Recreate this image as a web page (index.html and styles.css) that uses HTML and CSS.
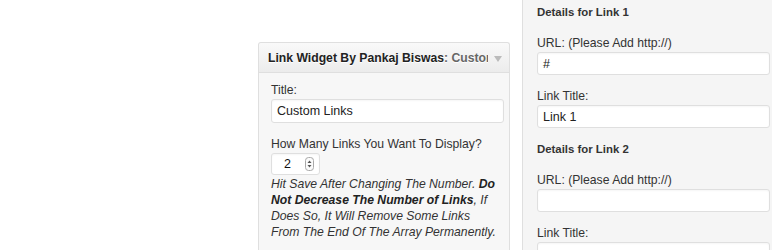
FILE: index.html
```html
<!DOCTYPE html>
<html lang="en">
<head>
  <meta charset="UTF-8">
  <title>Link Widget</title>
  <link rel="stylesheet" href="styles.css">
</head>
<body>
  <div class="page">
    <div class="widgets">
      <div class="widget">
        <div class="widget-top">
          <h3 class="widget-title">Link Widget By Pankaj Biswas<span class="in-title">: Custom Links</span></h3>
          <span class="widget-arrow"></span>
        </div>
        <div class="widget-inside">
          <p class="field">
            <label>Title:</label>
            <span class="input">Custom Links</span>
          </p>
          <p class="field">
            <label>How Many Links You Want To Display?</label>
            <span class="input number">
              <span class="num-value">2</span>
              <svg class="spinner" width="9" height="14" viewBox="0 0 9 14">
                <rect x="0.5" y="0.5" width="8" height="13" rx="3" fill="#fbfbfb" stroke="#a9a9a9"/>
                <path d="M2.5 6 L4.5 3.5 L6.5 6 Z" fill="#555"/>
                <path d="M2.5 8 L4.5 10.5 L6.5 8 Z" fill="#555"/>
              </svg>
            </span>
          </p>
          <p class="note">Hit Save After Changing The Number. <b>Do Not Decrease The Number of Links</b>, If Does So, It Will Remove Some Links From The End Of The Array Permanently.</p>
        </div>
      </div>
    </div>

    <div class="details">
      <h4>Details for Link 1</h4>
      <p class="field">
        <label>URL: (Please Add http://)</label>
        <span class="input">#</span>
      </p>
      <p class="field">
        <label>Link Title:</label>
        <span class="input">Link 1</span>
      </p>

      <h4>Details for Link 2</h4>
      <p class="field">
        <label>URL: (Please Add http://)</label>
        <span class="input"></span>
      </p>
      <p class="field">
        <label>Link Title:</label>
        <span class="input"></span>
      </p>
    </div>
  </div>
</body>
</html>
```

FILE: styles.css
```css
* {
  box-sizing: border-box;
}

body {
  margin: 0;
  font-family: "Liberation Sans", Arial, sans-serif;
  font-size: 12.2px;
  line-height: 16px;
  color: #333;
  background: #fff;
  overflow: hidden;
}

.page {
  display: flex;
  height: 250px;
}

.widgets {
  width: 522px;
  flex: none;
  padding: 42px 0 0 258px;
}

.widget {
  width: 252px;
  height: 208px;
  border: 1px solid #dfdfdf;
  border-bottom: none;
  border-radius: 3px 3px 0 0;
  background: #f7f7f7;
}

.widget-top {
  display: flex;
  align-items: center;
  height: 30px;
  border-bottom: 1px solid #dfdfdf;
  background: linear-gradient(to bottom, #f9f9f9, #ececec);
  border-radius: 3px 3px 0 0;
}

.widget-title {
  margin: 0;
  padding: 0 0 0 9px;
  width: 229px;
  font-size: 12.2px;
  font-weight: bold;
  color: #222;
  white-space: nowrap;
  overflow: hidden;
  text-shadow: 0 1px 0 #fff;
}

.in-title {
  color: #666;
}

.widget-arrow {
  margin-left: 6px;
  width: 0;
  height: 0;
  border-left: 4px solid transparent;
  border-right: 4px solid transparent;
  border-top: 6px solid #bbb;
  margin-top: 2px;
}

.widget-inside {
  padding: 9px 5px 0 12px;
}

.field {
  margin: 0 0 13px;
}

.field label {
  display: block;
  color: #333;
}

.input {
  display: flex;
  align-items: center;
  height: 24px;
  margin-top: 1px;
  padding: 0 5px;
  background: #fff;
  border: 1px solid #dfdfdf;
  border-radius: 3px;
  color: #222;
  font-size: 12.5px;
  box-shadow: inset 0 1px 2px rgba(0, 0, 0, 0.04);
}

.input.number {
  width: 49px;
  height: 22px;
  justify-content: space-between;
  padding: 0 5px 0 12px;
}

.num-value {
  color: #111;
}

.field:has(.number) {
  margin-bottom: 0;
}

.note {
  margin: 1px 6px 0 0;
  font-style: italic;
  color: #333;
}

.note b {
  color: #222;
}

.details {
  flex: 1;
  background: #f5f5f5;
  border-left: 1px solid #dfdfdf;
  padding: 4px 2px 0 14px;
}

.details h4 {
  margin: 0 0 15px;
  font-size: 11.4px;
  font-weight: bold;
  color: #333;
}

.details .input {
  height: 23px;
}
```
